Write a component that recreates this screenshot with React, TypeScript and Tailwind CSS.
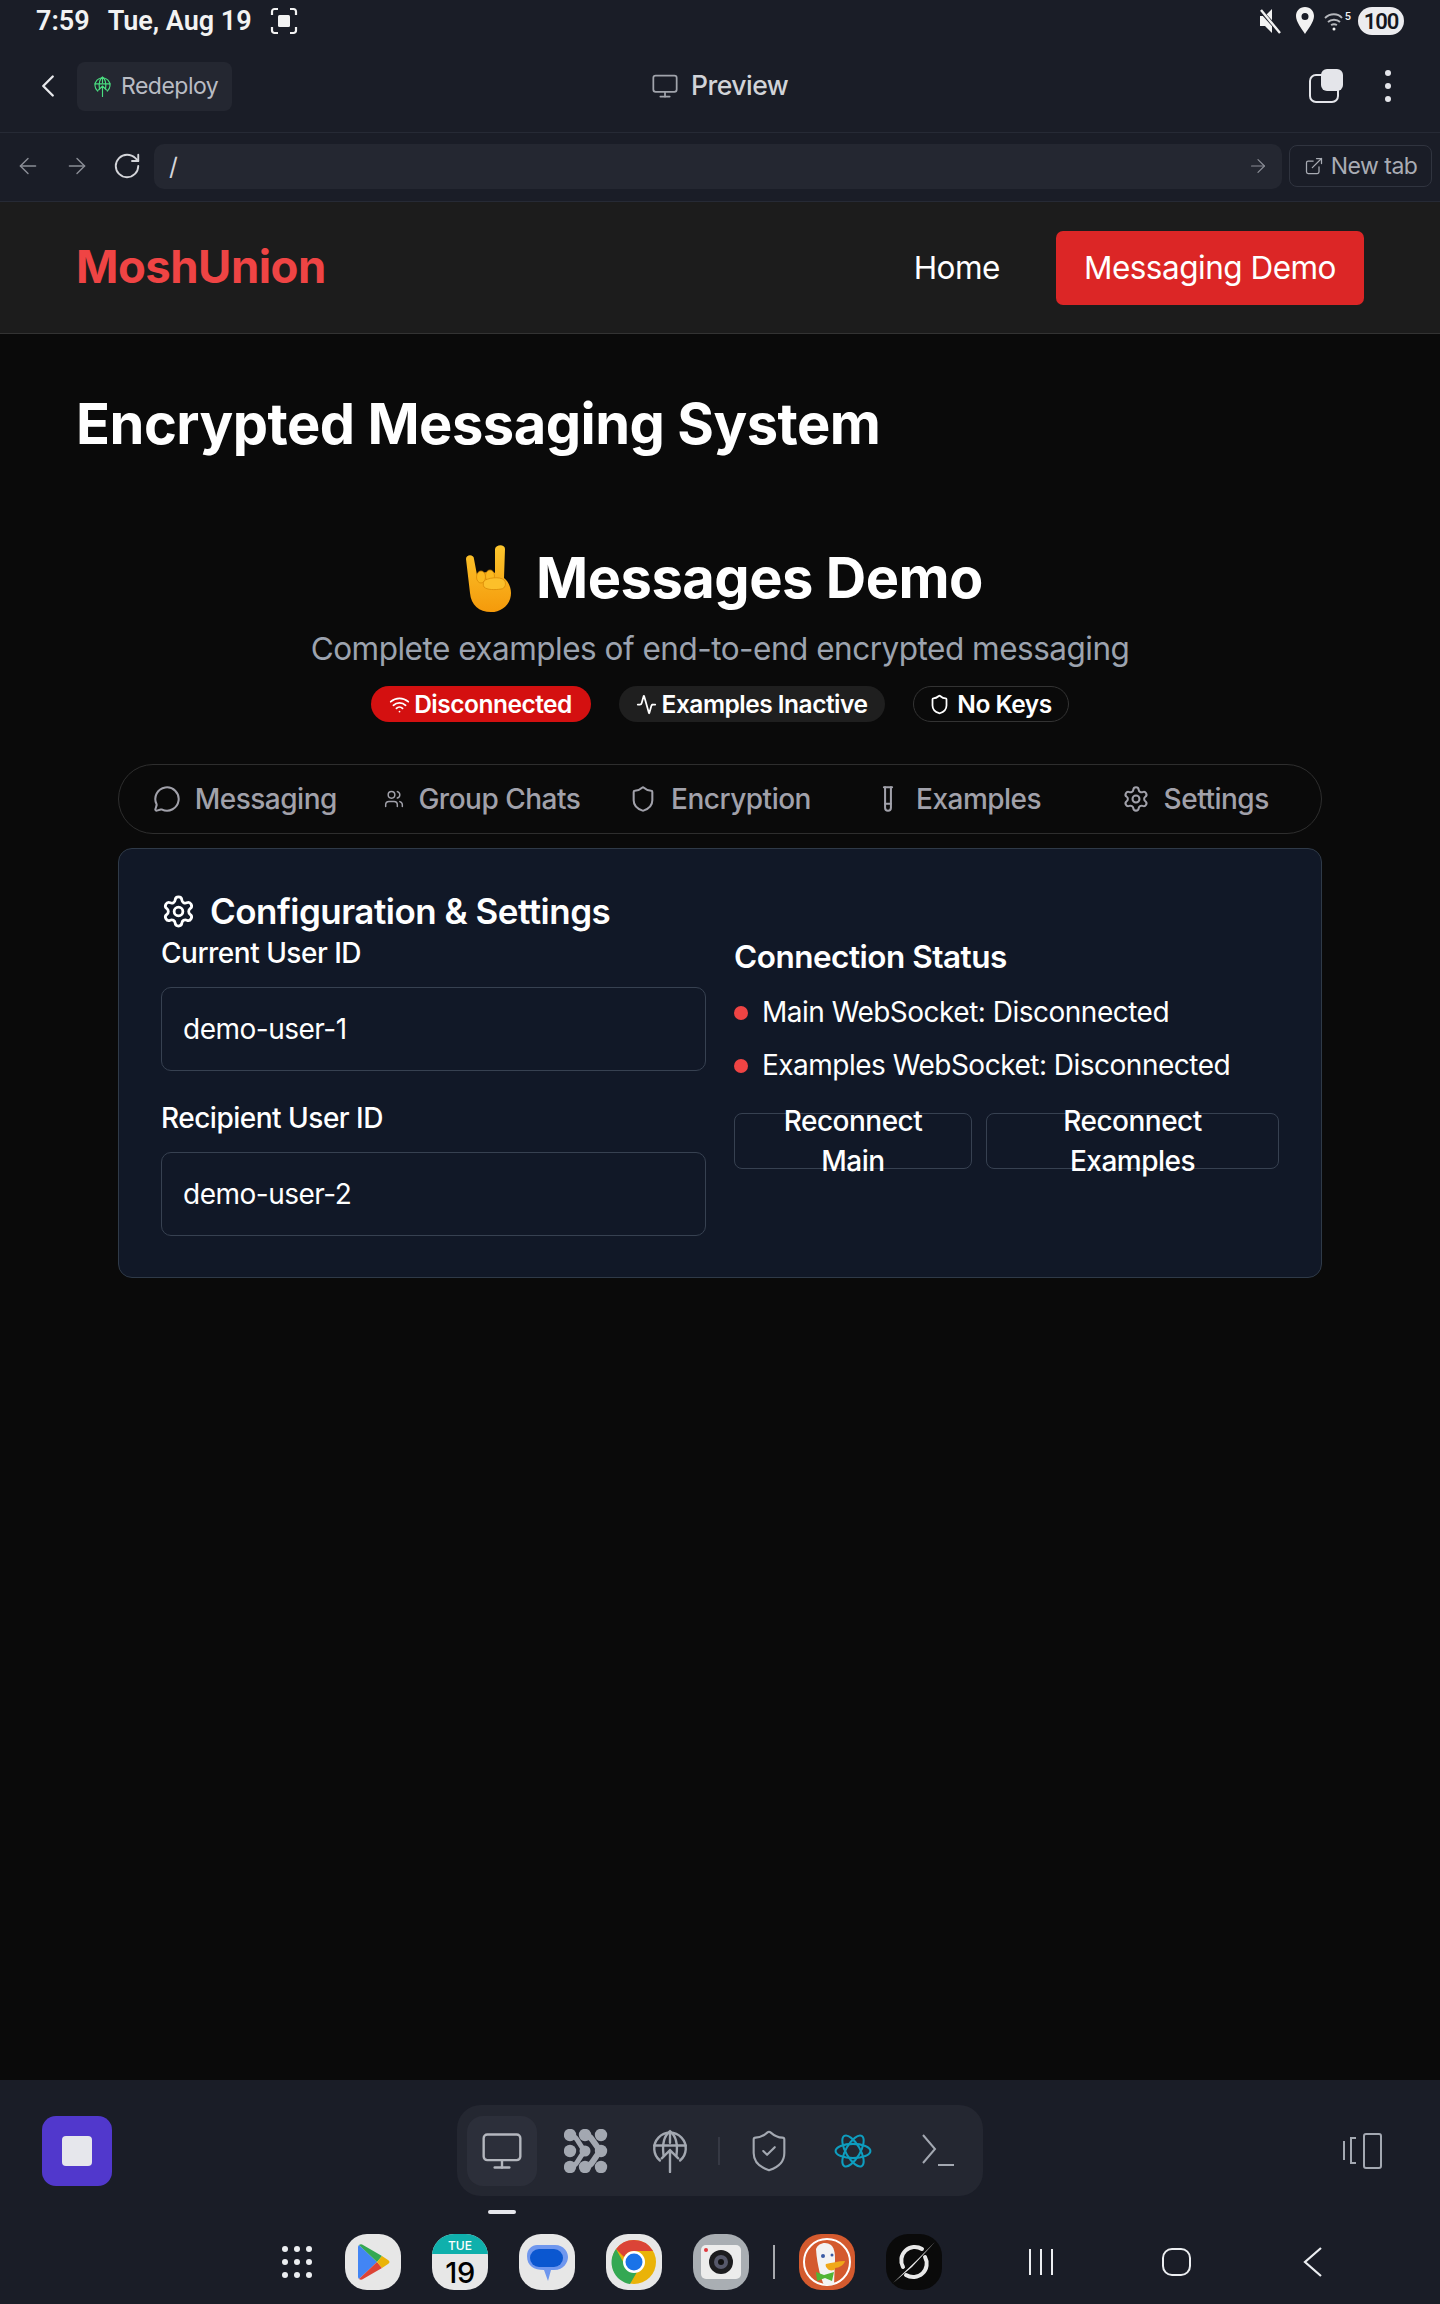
import {
  Activity,
  ArrowLeft,
  ArrowRight,
  ChevronLeft,
  ExternalLink,
  MessageCircle,
  Monitor,
  RotateCw,
  Settings,
  Shield,
  ShieldCheck,
  TestTube,
  Users,
  Wifi,
} from "lucide-react";

const tabs = [
  { label: "Messaging", icon: MessageCircle, size: 28 },
  { label: "Group Chats", icon: Users, size: 20 },
  { label: "Encryption", icon: Shield, size: 28 },
  { label: "Examples", icon: TestTube, size: 28 },
  { label: "Settings", icon: Settings, size: 28 },
];

function GlobeUp({ size, color }: { size: number; color: string }) {
  return (
    <svg width={size} height={size} viewBox="0 0 24 24" fill="none" stroke={color} strokeWidth="1.3" strokeLinecap="round">
      <path d="M6.5 17.2A8.6 8.6 0 1 1 17.5 17.2" />
      <path d="M3.4 9h17.2M8.5 14.5C7.6 8 9 3.5 12 1.2c3 2.3 4.4 6.800 3.500 13.300M12 1.500v6" />
      <path d="M12 23.500V11.500M7.500 16l4.500-4.500 4.500 4.500" />
    </svg>
  );
}

function Cluster() {
  return (
    <svg width="44" height="44" viewBox="0 0 44 44" fill="#a3a8b1">
      {[[6, 6], [21, 6], [37, 6], [6, 22], [37, 22], [6, 38], [21, 38], [37, 38]].map(([cx, cy]) => (
        <circle key={`${cx}-${cy}`} cx={cx} cy={cy} r="6.200" />
      ))}
      <circle cx="21" cy="22" r="5.500" />
      <path d="M6 6c8 1 8 9 15 16-7 7-7 15-15 16" fill="none" stroke="#a3a8b1" strokeWidth="5" />
      <path d="M21 6c8 1 8 9 16 16-8 7-8 15-16 16" fill="none" stroke="#a3a8b1" strokeWidth="6" />
    </svg>
  );
}

function RockHand() {
  return (
    <svg width="50" height="68" viewBox="16 10 50 68">
      <defs>
        <linearGradient id="hand" x1="0" y1="0" x2="0" y2="1">
          <stop offset="0" stopColor="#fcc62d" />
          <stop offset="1" stopColor="#f59a0b" />
        </linearGradient>
      </defs>
      <path
        d="M18 25c0-5 8-5 8 0l3 16c4-3 15-4 18-2l0-24c1-5 10-5 10 0l-1 29c4 3 7 9 7 15 0 11-9 19-20 19-12 0-20-7-21-19z"
        fill="url(#hand)"
      />
      <ellipse cx="33" cy="43" rx="4.500" ry="6" fill="#fbb91f" stroke="#d98a06" strokeWidth="0.800" />
      <ellipse cx="42" cy="42" rx="4.500" ry="6" fill="#fbb91f" stroke="#d98a06" strokeWidth="0.800" />
      <path d="M36 47c3-3 16-5 20-1 3 3 1 9-3 9-6 1-14 1-17-2-1-2-1-4 0-6z" fill="#fcc02a" stroke="#d98a06" strokeWidth="0.800" />
    </svg>
  );
}

function AppShape({ children, bg }: { children: React.ReactNode; bg: string }) {
  return (
    <div className={`flex h-[56px] w-[56px] items-center justify-center overflow-hidden rounded-[22px] ${bg}`}>
      {children}
    </div>
  );
}

function Dock() {
  return (
    <div className="flex h-[56px] items-center pl-[282px]">
      <div className="mr-[33px] grid w-[30px] grid-cols-3 gap-x-[6px] gap-y-[7px]">
        {Array.from({ length: 9 }).map((_, i) => (
          <span key={i} className="h-[6px] w-[6px] rounded-full bg-[#eceef1]" />
        ))}
      </div>
      <div className="flex gap-[31px]">
        <AppShape bg="bg-[#e7e7e7]">
          <svg width="36" height="38" viewBox="0 0 36 38">
            <path d="M4 2c-1 1-1 2-1 3v28c0 1 0 2 1 3l18-17z" fill="#4285f4" />
            <path d="M4 2c1-1 3-1 4 0l19 11-5 6z" fill="#34a853" />
            <path d="M4 36c1 1 3 1 4 0l19-11-5-6z" fill="#db4437" />
            <path d="M27 13l6 4c2 1 2 3 0 4l-6 4-5-6z" fill="#eab308" />
          </svg>
        </AppShape>
        <div className="flex h-[56px] w-[56px] flex-col overflow-hidden rounded-[22px] bg-[#e7e7e7]">
          <div className="flex h-[20px] shrink-0 items-end justify-center bg-[#0fb0ac] text-[12px] font-medium leading-[17px] tracking-normal text-white">TUE</div>
          <div className="flex flex-1 items-center justify-center text-[29px] font-medium leading-none text-black">19</div>
        </div>
        <AppShape bg="bg-[#e7e7e7]">
          <svg width="42" height="42" viewBox="0 0 42 42">
            <path d="M11 4h18c9 0 13 7 13 12s-4 13-14 13h-3l-3 11-4-11C8 29 1 25 1 15 1 8 6 4 11 4z" fill="#6f97ee" />
            <rect x="4" y="8" width="33" height="18" rx="9" fill="#0b57d0" />
          </svg>
        </AppShape>
        <AppShape bg="bg-[#e7e7e7]">
          <svg width="46" height="46" viewBox="0 0 46 46">
            <circle cx="23" cy="23" r="22" fill="#eab308" />
            <path d="M23 1a22 22 0 0 1 19 11H23a11 11 0 0 0-10 6L5 10A22 22 0 0 1 23 1z" fill="#db4437" />
            <path d="M5 10l10 18a10 10 0 0 0 11 5l-7 12A22 22 0 0 1 5 10z" fill="#34a853" />
            <circle cx="23" cy="23" r="11" fill="#fff" />
            <circle cx="23" cy="23" r="8.500" fill="#1a73e8" />
          </svg>
        </AppShape>
        <AppShape bg="bg-[#a9aeb3]">
          <div className="relative flex h-[34px] w-[40px] items-center justify-center rounded-[5px] bg-[#ececec]">
            <span className="absolute left-[3px] top-[3px] h-[4px] w-[4px] rounded-full bg-[#e0393e]" />
            <svg width="24" height="24" viewBox="0 0 24 24">
              <circle cx="12" cy="12" r="12" fill="#1c1c1f" />
              <circle cx="12" cy="12" r="7" fill="#56586a" />
              <circle cx="12" cy="12" r="3" fill="#111" />
            </svg>
          </div>
        </AppShape>
      </div>
      <span className="mx-[24px] h-[34px] w-[2px] bg-[#a7a9ae]" />
      <div className="flex gap-[31px]">
        <AppShape bg="bg-[#d45a2e]">
          <svg width="50" height="50" viewBox="0 0 50 50">
            <circle cx="25" cy="25" r="23" fill="none" stroke="#fff" strokeWidth="2" />
            <path d="M14 12c2-6 10-8 15-4 4 4 4 10 4 15l-1 25H22c-3-6-7-20-8-36z" fill="#f3f3f3" />
            <circle cx="21" cy="19" r="2" fill="#3b5ba5" />
            <circle cx="30" cy="18" r="1.500" fill="#3b5ba5" />
            <path d="M24 27c6-1 12-3 19-3-1 4-6 7-10 7 1 2-3 3-6 2-3-2-4-5-3-6z" fill="#f0a818" />
            <path d="M22 38l-8-3 1 9 8-3 7 3 2-9z" fill="#52b535" />
          </svg>
        </AppShape>
        <AppShape bg="bg-[#0a0a0a]">
          <svg width="46" height="46" viewBox="0 0 46 46" fill="none">
            <path d="M31 10a13.500 13.500 0 0 0-19 18M15 36a13.500 13.500 0 0 0 19-18" stroke="#e8e8e8" strokeWidth="4" strokeLinecap="round" />
            <path d="M44 3L25 22 2 44l19-16z" fill="#e8e8e8" />
          </svg>
        </AppShape>
      </div>
      <div className="ml-[86px] flex items-center">
        <svg width="26" height="28" viewBox="0 0 26 28" stroke="#eceef1" strokeWidth="2">
          <path d="M2 1v26M13 1v26M24 1v26" />
        </svg>
        <span className="ml-[108px] h-[28px] w-[29px] rounded-[10px] border-2 border-[#eceef1]" />
        <svg className="ml-[112px]" width="20" height="30" viewBox="0 0 20 30" fill="none" stroke="#eceef1" strokeWidth="2.200">
          <path d="M18 1L2 15l16 14" />
        </svg>
      </div>
    </div>
  );
}

export default function App() {
  return (
    <div className="flex h-[2304px] w-[1440px] flex-col overflow-hidden bg-[#0a0a0a] font-['Inter',sans-serif] tracking-[-0.5px] text-white">
      {/* device status + preview toolbar */}
      <div className="bg-[#1a1d27]">
        <div className="flex h-[40px] items-center pl-[36px] pr-[36px] pt-[2px] font-['Roboto',sans-serif] text-[27px] font-semibold tracking-normal text-[#f2f2f2]">
          <span>7:59</span>
          <span className="ml-[18px]">Tue, Aug 19</span>
          <svg className="ml-[18px]" width="28" height="28" viewBox="0 0 28 28" fill="none" stroke="#f2f2f2" strokeWidth="2.200">
            <path d="M2 8V4.500A2.500 2.500 0 0 1 4.500 2H8M20 2h3.500A2.500 2.500 0 0 1 26 4.500V8M26 20v3.500a2.500 2.500 0 0 1-2.500 2.500H20M8 26H4.500A2.500 2.500 0 0 1 2 23.500V20" />
            <rect x="8" y="8" width="12" height="12" rx="1.500" fill="#f2f2f2" stroke="none" />
          </svg>
          <div className="ml-auto flex items-center">
            <svg width="22" height="26" viewBox="0 0 22 26" fill="#f2f2f2">
              <path d="M1 8h5l7-7v24l-7-7H1z" />
              <path d="M1 2l20 22" stroke="#1a1d27" strokeWidth="4" />
              <path d="M2 2l19 23" stroke="#f2f2f2" strokeWidth="2.400" />
            </svg>
            <svg className="ml-[14px]" width="20" height="28" viewBox="0 0 20 28">
              <path fillRule="evenodd" d="M10 0c5.500 0 9 4 9 9 0 6-6 13-9 18C7 22 1 15 1 9c0-5 3.500-9 9-9zm0 6a3.500 3.500 0 1 0 0 7 3.500 3.500 0 0 0 0-7z" fill="#f2f2f2" />
            </svg>
            <svg className="ml-[9px]" width="26" height="22" viewBox="0 0 26 22" fill="none" stroke="#b6b8bd" strokeWidth="1.800">
              <path d="M1 8c5-5 13-5 17 0M4 12c3-3 9-3 12 0M7 15c2-1 4-1 6 0" />
              <circle cx="10" cy="19" r="1.500" fill="#f2f2f2" stroke="none" />
            </svg>
            <span className="ml-[-5px] mt-[-10px] text-[11px] font-medium leading-none">5</span>
            <span className="ml-[7px] flex h-[28px] w-[46px] items-center justify-center rounded-full bg-[#ececef] text-[22px] font-semibold tracking-[-1px] text-[#15171d]">100</span>
          </div>
        </div>
        <div className="flex h-[93px] items-center border-b border-[#262a35] pl-[36px] pr-[49px]">
          <ChevronLeft size={38} strokeWidth={1.500} className="ml-[-7px] text-[#e8e9ec]" />
          <div className="ml-[10px] flex h-[49px] w-[155px] items-center rounded-[8px] bg-[#242731] pl-[15px] text-[23px] text-[#b9bcc4]">
            <GlobeUp size={21} color="#4ade80" />
            <span className="ml-[8px]">Redeploy</span>
          </div>
          <div className="ml-[419px] flex items-center text-[#d1d3d8]">
            <Monitor size={28} strokeWidth={1.500} className="text-[#a1a4ac]" />
            <span className="ml-[12px] text-[26.500px] font-medium">Preview</span>
          </div>
          <div className="relative ml-auto mr-[42px] h-[34px] w-[34px]">
            <span className="absolute bottom-0 left-0 h-[29px] w-[30px] rounded-[7px] border-2 border-[#e4e5ea]" />
            <span className="absolute right-0 top-0 h-[22px] w-[22px] rounded-[6px] bg-[#e4e5ea]" />
          </div>
          <div className="flex flex-col gap-[7px]">
            <span className="h-[6px] w-[6px] rounded-full bg-[#e4e5ea]" />
            <span className="h-[6px] w-[6px] rounded-full bg-[#e4e5ea]" />
            <span className="h-[6px] w-[6px] rounded-full bg-[#e4e5ea]" />
          </div>
        </div>
        <div className="flex h-[69px] items-center border-b border-[#262a35] pb-[2px] pl-[15px] pr-[8px]">
          <ArrowLeft size={26} strokeWidth={1.300} className="text-[#8b8e97]" />
          <ArrowRight size={26} strokeWidth={1.300} className="ml-[23px] text-[#8b8e97]" />
          <RotateCw size={30} strokeWidth={1.500} className="ml-[22px] text-[#d4d5da]" />
          <div className="ml-[12px] flex h-[45px] flex-1 items-center justify-between rounded-[10px] bg-[#242731] pl-[15px] pr-[13px] text-[24.500px] text-[#d4d5da]">
            <span>/</span>
            <ArrowRight size={22} strokeWidth={1.300} className="text-[#8b8e97]" />
          </div>
          <div className="ml-[7px] flex h-[42px] w-[143px] items-center justify-center rounded-[8px] border border-[#30343f] text-[23px] text-[#a9acb4]">
            <ExternalLink size={20} strokeWidth={1.500} />
            <span className="ml-[7px]">New tab</span>
          </div>
        </div>
      </div>

      {/* site nav */}
      <header className="flex h-[132px] shrink-0 items-center border-b border-[#333333] bg-[#1c1c1c] pl-[76px] pr-[76px]">
        <span className="text-[45.500px] font-bold text-[#ef4444]">MoshUnion</span>
        <nav className="ml-auto flex items-center">
          <span className="text-[31.500px]">Home</span>
          <span className="ml-[56px] flex h-[74px] items-center rounded-[7px] bg-[#dc2626] px-[28px] text-[31.500px]">Messaging Demo</span>
        </nav>
      </header>

      <main className="flex-1 px-[76px] pt-[55px]">
        <h1 className="text-[56px] font-bold leading-[70px]">Encrypted Messaging System</h1>
        <div className="mt-[85px] flex items-center justify-center pl-[7px]">
          <RockHand />
          <h2 className="ml-[22px] text-[56px] font-bold leading-[66px]">Messages Demo</h2>
        </div>
        <p className="mt-[15px] text-center text-[31.500px] leading-[44px] text-[#9ca3af]">
          Complete examples of end-to-end encrypted messaging
        </p>
        <div className="mt-[15px] flex justify-center gap-[28px] pr-[1px] text-[24.500px] font-semibold">
          <span className="flex h-[36px] w-[220px] items-center justify-center rounded-full bg-[#d41010]">
            <Wifi size={21} className="mr-[4px]" />
            Disconnected
          </span>
          <span className="flex h-[36px] w-[266px] items-center justify-center rounded-full bg-[#1f1f1f]">
            <Activity size={21} className="mr-[5px]" />
            Examples Inactive
          </span>
          <span className="flex h-[36px] w-[156px] items-center justify-center rounded-full border border-[#333333]">
            <Shield size={21} className="mr-[7px]" />
            No Keys
          </span>
        </div>

        <div className="mx-[42px] mt-[42px] grid h-[70px] grid-cols-5 items-center rounded-[35px] border border-[#2e2e2e] px-[7px] text-[28px] font-medium text-[#a1a1aa]">
          {tabs.map((tab) => (
            <div key={tab.label} className="flex items-center justify-center gap-[14px]">
              <tab.icon size={tab.size} strokeWidth={1.750} />
              <span>{tab.label}</span>
            </div>
          ))}
        </div>

        <section className="mx-[42px] mt-[14px] rounded-[14px] border border-[#2f3a48] bg-[#111827] px-[42px] pb-[41px] pt-[39px]">
          <div className="flex h-[47px] items-center gap-[14px]">
            <Settings size={35} strokeWidth={1.900} />
            <h3 className="text-[35px] font-semibold">Configuration &amp; Settings</h3>
          </div>
          <div className="grid grid-cols-2 gap-[28px]">
            <div>
              <label className="block text-[28px] font-medium leading-[36px]">Current User ID</label>
              <div className="mt-[16px] flex h-[84px] items-center rounded-[10px] border border-[#374151] px-[21px] text-[28px]">demo-user-1</div>
              <label className="mt-[29px] block text-[28px] font-medium leading-[36px]">Recipient User ID</label>
              <div className="mt-[16px] flex h-[84px] items-center rounded-[10px] border border-[#374151] px-[21px] text-[28px]">demo-user-2</div>
            </div>
            <div>
              <h4 className="text-[31.500px] font-semibold leading-[44px]">Connection Status</h4>
              <div className="mt-[14px] flex flex-col gap-[14px] text-[28px] leading-[39px]">
                <div className="flex items-center gap-[14px]">
                  <span className="h-[14px] w-[14px] rounded-full bg-[#ef4444]" />
                  Main WebSocket: Disconnected
                </div>
                <div className="flex items-center gap-[14px]">
                  <span className="h-[14px] w-[14px] rounded-full bg-[#ef4444]" />
                  Examples WebSocket: Disconnected
                </div>
              </div>
              <div className="mt-[28px] flex gap-[14px] text-[28px] font-medium leading-[40px]">
                <button className="flex h-[56px] w-[238px] items-center justify-center rounded-[8px] border border-[#374151] px-[28px] text-center">Reconnect Main</button>
                <button className="flex h-[56px] flex-1 items-center justify-center rounded-[8px] border border-[#374151] px-[28px] text-center">Reconnect Examples</button>
              </div>
            </div>
          </div>
        </section>
      </main>

      {/* bottom app bar + dock */}
      <div className="h-[224px] shrink-0 bg-[#1a1d27]">
        <div className="flex items-start pl-[42px] pr-[57px] pt-[25px]">
          <div className="mt-[11px] flex h-[70px] w-[70px] items-center justify-center rounded-[14px] bg-[#5138cc]">
            <span className="h-[30px] w-[30px] rounded-[4px] bg-[#e6e7ec]" />
          </div>
          <div className="ml-[345px] flex h-[91px] w-[526px] items-center rounded-[24px] bg-[#242731] pl-[10px] pr-[26px]">
            <div className="flex h-[70px] w-[70px] items-center justify-center rounded-[16px] bg-[#2c2f3a]">
              <Monitor size={44} strokeWidth={1.300} className="text-[#b4b7be]" />
            </div>
            <div className="ml-[27px]"><Cluster /></div>
            <div className="ml-[40px]"><GlobeUp size={44} color="#a3a8b1" /></div>
            <span className="ml-[26px] h-[28px] w-[2px] bg-[#363944]" />
            <ShieldCheck size={46} strokeWidth={1.100} className="ml-[26px] text-[#a3a8b1]" />
            <svg className="ml-[42px]" width="38" height="44" viewBox="-12 -13 24 26" fill="none" stroke="#0e9dbf" strokeWidth="1.300">
              <ellipse rx="11" ry="4.500" />
              <ellipse rx="11" ry="4.500" transform="rotate(60)" />
              <ellipse rx="11" ry="4.500" transform="rotate(120)" />
            </svg>
            <svg className="ml-[50px]" width="32" height="34" viewBox="0 0 32 34" fill="none" stroke="#a3a8b1" strokeWidth="2">
              <path d="M1 1l12 14L1 29M16 31h16" />
            </svg>
          </div>
          <svg className="ml-auto mt-[28px]" width="40" height="36" viewBox="0 0 40 36" fill="none" stroke="#a3a8b1" strokeWidth="2">
            <path d="M1 8v19M13 5H8v25h5" />
            <rect x="21" y="1" width="17" height="34" rx="2" />
          </svg>
        </div>
        <div className="ml-[488px] mt-[14px] h-[4px] w-[28px] rounded-full bg-[#e6e7ec]" />
        <div className="mt-[20px]">
          <Dock />
        </div>
      </div>
    </div>
  );
}
